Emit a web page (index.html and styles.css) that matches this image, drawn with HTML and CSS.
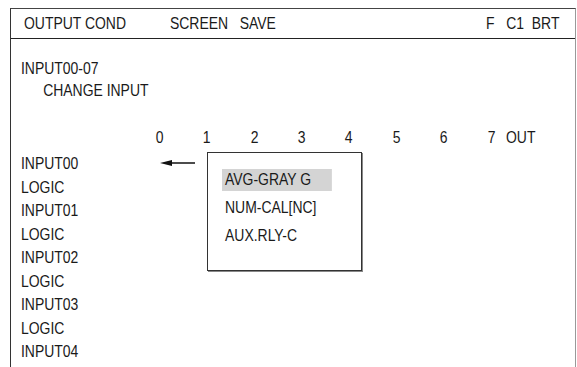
FILE: index.html
```html
<!DOCTYPE html>
<html>
<head>
    <title>Output Cond</title>
    <link rel="stylesheet" href="styles.css">
</head>
<body>
    <div class="screen">
        <div class="header">
            <span class="title">OUTPUT COND</span>
            <span class="save">SCREEN&nbsp;&nbsp;&nbsp;SAVE</span>
            <span class="status">F&nbsp;&nbsp;&nbsp;C1&nbsp;&nbsp;BRT</span>
        </div>
        <div class="content">
            <div class="intro">
                <div>INPUT00-07</div>
                <div class="sub">CHANGE INPUT</div>
            </div>
            <div class="cols">
                <span>0</span>
                <span>1</span>
                <span>2</span>
                <span>3</span>
                <span>4</span>
                <span>5</span>
                <span>6</span>
                <span>7</span>
                <span class="out">OUT</span>
            </div>
            <div class="rows">
                <div class="list">
                    <div>INPUT00</div>
                    <div>LOGIC</div>
                    <div>INPUT01</div>
                    <div>LOGIC</div>
                    <div>INPUT02</div>
                    <div>LOGIC</div>
                    <div>INPUT03</div>
                    <div>LOGIC</div>
                    <div>INPUT04</div>
                </div>

                <svg class="arrow" width="38" height="10" viewBox="0 0 38 10">
                    <path d="M11 5 H36" stroke="#111" stroke-width="1.5"/>
                    <path d="M1 5 L13 2 L13 8 Z" fill="#111"/>
                </svg>

                <div class="menu">
                    <div class="item selected">AVG-GRAY G</div>
                    <div class="item">NUM-CAL[NC]</div>
                    <div class="item">AUX.RLY-C</div>
                </div>
            </div>
        </div>
    </div>
</body>
</html>
```

FILE: styles.css
```css
body {
    margin: 0;
    background-color: #fff;
    font-family: "Liberation Sans", Arial, sans-serif;
    font-size: 17px;
    color: #1a1a1a;
}

/* no narrow face installed, so texts are squeezed to Arial Narrow width */
.header span,
.intro div,
.list div,
.menu .item,
.cols span {
    transform: scaleX(0.82);
    transform-origin: left center;
}

.screen {
    margin: 8px 0 0 10px;
    width: 563.5px;
    height: 359px;
    border-top: 1px solid #444;
    border-left: 1.5px solid #333;
    border-right: 1px solid #999;
    overflow: hidden;
}
.header {
    display: flex;
    align-items: center;
    height: 29px;
    padding: 0 14.7px 0 12.8px;
    border-bottom: 1.5px solid #222;
}
.header .title {
    width: 146px;
}
.header .status {
    margin-left: auto;
    transform-origin: right center;
}
.content {
    padding: 19px 0 0 10px;
    line-height: 22px;
}
.intro .sub {
    padding-left: 27px;
}
.cols {
    display: flex;
    margin: 25px 0 0 114.8px;
}
.cols span {
    width: 47.4px;
    text-align: center;
    transform-origin: center;
}
.cols .out {
    margin-left: -8.5px;
    text-align: left;
    transform-origin: left center;
}
.rows {
    position: relative;
    margin-top: 3px;
    line-height: 23.5px;
}
.arrow {
    position: absolute;
    left: 137.5px;
    top: 6px;
}
.menu {
    position: absolute;
    left: 185.5px;
    top: 0;
    width: 155px;
    height: 119px;
    padding: 16px 0 0 14px;
    box-sizing: border-box;
    border: 1px solid #333;
    border-width: 1px 1.3px 1.5px 1px;
    box-shadow: 1px 1px 0 #888;
    background-color: #fff;
}
.menu .item {
    width: 134px;
    height: 22px;
    margin-bottom: 6px;
    padding-left: 3.7px;
    line-height: 22px;
    box-sizing: border-box;
}
.menu .selected {
    background-color: #d4d4d4;
}
```
